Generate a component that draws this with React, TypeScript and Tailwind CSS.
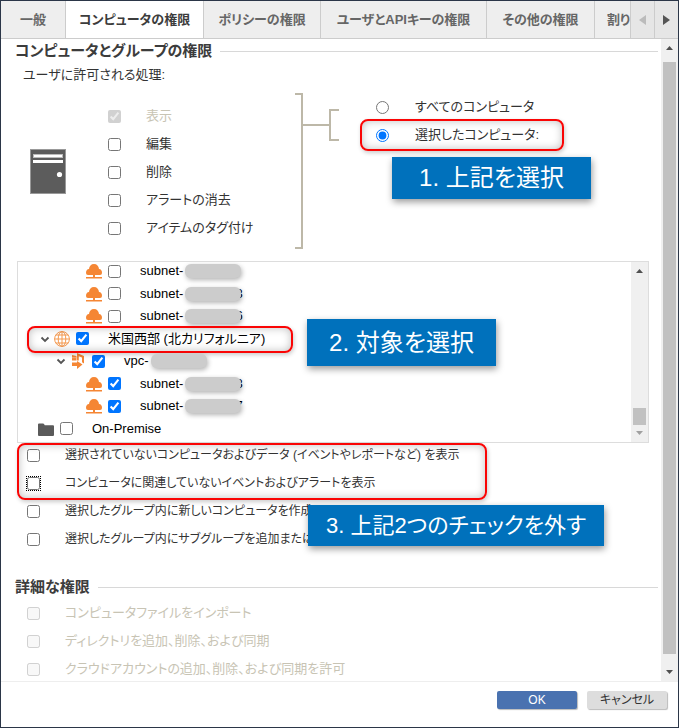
import { ReactNode, useState } from "react";

const TABS = [
  { label: "一般", width: "w-[65px]" },
  { label: "コンピュータの権限", width: "w-[138px]" },
  { label: "ポリシーの権限", width: "w-[117px]" },
  { label: "ユーザとAPIキーの権限", width: "w-[166px]" },
  { label: "その他の権限", width: "w-[108px]" },
  { label: "割り", width: "w-12" },
];

const ACTIONS = [
  { label: "表示", checked: true, disabled: true },
  { label: "編集" },
  { label: "削除" },
  { label: "アラートの消去" },
  { label: "アイテムのタグ付け" },
];

const ADVANCED = [
  "コンピュータファイルをインポート",
  "ディレクトリを追加、削除、および同期",
  "クラウドアカウントの追加、削除、および同期を許可",
];

interface TreeItem {
  kind: "subnet" | "vpc" | "region" | "folder";
  label: string;
  tail?: string;
  checked?: boolean;
}

const TREE: TreeItem[] = [
  { kind: "subnet", label: "subnet-", tail: "" },
  { kind: "subnet", label: "subnet-", tail: "3" },
  { kind: "subnet", label: "subnet-", tail: "6" },
  { kind: "region", label: "米国西部 (北カリフォルニア)", checked: true },
  { kind: "vpc", label: "vpc-", tail: "", checked: true },
  { kind: "subnet", label: "subnet-", tail: "3", checked: true },
  { kind: "subnet", label: "subnet-", tail: "7", checked: true },
  { kind: "folder", label: "On-Premise" },
];

const INDENT = {
  folder: "pl-1",
  region: "pl-5",
  vpc: "pl-9",
  subnet: "pl-[52px]",
};

const Arrow = ({ dir, className }: { dir: "up" | "down"; className: string }) => (
  <svg viewBox="0 0 7 4" className={`w-[7px] h-1 ${className}`} fill="currentColor">
    <path d={dir === "up" ? "M3.5 0 7 4H0z" : "M0 0h7L3.5 4z"} />
  </svg>
);

const ServerIcon = () => (
  <svg viewBox="0 0 36 45" className="w-9 h-[45px] shrink-0">
    <rect width="36" height="45" fill="#999" />
    <rect x="1" y="1" width="34" height="43" fill="#5c5c5c" />
    <rect x="3" y="5" width="30" height="4" fill="#bbb" />
    <rect x="4" y="6" width="28" height="2" fill="#fff" />
    <rect x="3" y="11" width="30" height="3" fill="#fff" />
    <circle cx="29.5" cy="25.5" r="2.6" fill="#fff" />
  </svg>
);

const BracketIcon = () => (
  <svg
    viewBox="0 0 44 156"
    className="w-11 h-[156px] shrink-0"
    fill="none"
    stroke="#bdb8a8"
    strokeWidth="2"
  >
    <path d="M0 1h7v154H0M7 32h28M44 17h-9v30h9" />
  </svg>
);

const TreeIcon = ({ kind }: { kind: TreeItem["kind"] }) => {
  if (kind === "subnet") {
    return (
      <svg viewBox="0 0 16 16" className="w-4 h-4 shrink-0" fill="#f58634">
        <path d="M2 12Q0 12 0 10C0 7.500 1 6.200 3 6 3.300 3 5 1 8 1s4.700 2 5 5c2 .2 3 1.500 3 4Q16 12 14 12z" />
        <path d="M7 12h2v2H7zM0 14h16v1.400H0z" />
      </svg>
    );
  }
  if (kind === "region") {
    return (
      <svg
        viewBox="0 0 16 16"
        className="w-4 h-4 shrink-0"
        fill="none"
        stroke="#f5994f"
        strokeWidth="1"
      >
        <circle cx="8" cy="8" r="7.400" />
        <ellipse cx="8" cy="8" rx="3.800" ry="7.400" />
        <path d="M8 .5v15M.5 8h15M1.800 4h12.400M1.800 12h12.400" />
      </svg>
    );
  }
  if (kind === "vpc") {
    return (
      <svg viewBox="0 0 16 16" className="w-4 h-4 shrink-0" fill="#f58634">
        <path d="M2 2 6.500 3v4.500H2zM2 9.500h5V8l5.500 3.500L7 16v-3H2z" />
        <path d="M7 0 14 3v7.500L12 9.300V4.500L8.800 3.200V7.500H7z" />
        <path d="M2 4.700h4.500" stroke="#fbc59c" strokeWidth=".7" />
      </svg>
    );
  }
  return (
    <svg viewBox="0 0 16 16" className="w-4 h-4 shrink-0" fill="#5a5a5a">
      <path d="M0 3.500Q0 2.500 1 2.500H5q.8 0 1.200.8l.5.9H15q1 0 1 1V14q0 1-1 1H1q-1 0-1-1z" />
    </svg>
  );
};

const Chevron = () => (
  <svg
    viewBox="0 0 10 10"
    className="w-2.5 h-2.5 shrink-0"
    fill="none"
    stroke="#555"
    strokeWidth="1.800"
  >
    <path d="M1.500 3.500 5 7l3.500-3.500" />
  </svg>
);

// Red frame drawn around the control that a step talks about
const Highlight = ({ className }: { className: string }) => (
  <div
    className={`absolute z-10 pointer-events-none rounded-lg border-2 border-[#fa0505] shadow-[inset_0_0_9px_rgba(0,0,0,0.25),1px_2px_4px_rgba(0,0,0,0.2)] ${className}`}
  />
);

const Callout = ({ className, children }: { className: string; children: ReactNode }) => (
  <div
    className={`absolute z-20 flex items-center justify-center whitespace-nowrap bg-[#0071bc] text-white shadow-[1px_3px_7px_rgba(0,0,0,0.4)] ${className}`}
  >
    {children}
  </div>
);

const SectionTitle = ({ children }: { children: ReactNode }) => (
  <div className="flex items-center gap-2 h-5 pr-[3px]">
    <h2 className="text-[15px] font-bold text-[#3c3c3c] whitespace-nowrap">{children}</h2>
    <div className="flex-1 h-px bg-[#d8d8d8]" />
  </div>
);

interface CheckRowProps {
  label: string;
  checked?: boolean;
  disabled?: boolean;
  focused?: boolean;
}

const CheckRow = ({ label, checked, disabled, focused }: CheckRowProps) => (
  <label
    className={`flex items-center gap-[25px] h-7 whitespace-nowrap ${
      disabled ? "text-[#c8c4b4]" : "text-[#333]"
    }`}
  >
    <input
      type="checkbox"
      defaultChecked={checked}
      disabled={disabled}
      className={`w-[13px] h-[13px] shrink-0 ${
        focused ? "outline-1 outline-dotted outline-black" : ""
      }`}
    />
    {label}
  </label>
);

const TreeRow = ({ item }: { item: TreeItem }) => {
  const { kind, label, tail, checked } = item;
  const expandable = kind === "region" || kind === "vpc";

  return (
    <li className={`relative flex flex-1 items-center ${INDENT[kind]}`}>
      {kind === "region" && <Highlight className="left-[9px] -top-0.5 w-[266px] h-[27px]" />}
      {expandable ? (
        <button
          type="button"
          aria-label="折りたたむ"
          className="flex items-center w-4 h-4 pl-0.5 shrink-0"
        >
          <Chevron />
        </button>
      ) : (
        <span className="w-4 shrink-0" />
      )}
      <TreeIcon kind={kind} />
      <label className="flex items-center pl-1.5 text-black whitespace-nowrap">
        <input
          type="checkbox"
          defaultChecked={checked}
          className="w-[13px] h-[13px] mr-[19px] shrink-0"
        />
        {label}
        {tail !== undefined && (
          <>
            <span className="relative z-10 ml-0.5 w-14 h-3.5 rounded-md bg-[#ccc] shadow-[1px_2px_5px_rgba(0,0,0,0.3)]" />
            <span className="-ml-1.5">{tail}</span>
          </>
        )}
      </label>
    </li>
  );
};

const App = () => {
  const [activeTab, setActiveTab] = useState(1);
  const [scope, setScope] = useState("selected");

  return (
    <div className="flex flex-col h-screen overflow-hidden border border-[#2b3648] bg-white text-[13px] leading-5 font-['Liberation_Sans','Noto_Sans_CJK_JP',sans-serif] [font-feature-settings:'palt']">
      <nav className="flex shrink-0 h-[38px] border-b border-[#ccc] bg-[#eee]">
        <div className="flex flex-1 min-w-0 overflow-hidden">
          {TABS.map((tab, i) => (
            <button
              key={tab.label}
              type="button"
              onClick={() => setActiveTab(i)}
              className={`shrink-0 border-r border-[#ccc] font-bold whitespace-nowrap ${tab.width} ${
                i === activeTab ? "bg-white text-[#3c3c3c]" : "text-[#666]"
              }`}
            >
              {tab.label}
            </button>
          ))}
        </div>
        <button
          type="button"
          aria-label="前へ"
          className="flex items-center justify-center w-6 border-l border-[#ccc] bg-[#e6e6e6] text-[#bbb]"
        >
          <svg viewBox="0 0 7 10" className="w-[7px] h-2.5" fill="currentColor">
            <path d="M7 0v10L0 5z" />
          </svg>
        </button>
        <button
          type="button"
          aria-label="次へ"
          className="flex items-center justify-center w-6 border-l border-[#ccc] bg-[#e6e6e6] text-[#555]"
        >
          <svg viewBox="0 0 7 10" className="w-[7px] h-2.5" fill="currentColor">
            <path d="M0 0v10l7-5z" />
          </svg>
        </button>
      </nav>

      <div className="flex flex-1 min-h-0">
        <main className="flex-1 min-w-0 overflow-hidden pt-0.5 pl-3.5">
          <SectionTitle>コンピュータとグループの権限</SectionTitle>
          <p className="mt-1 pl-2 text-[#333]">ユーザに許可される処理:</p>

          <div className="flex mt-2">
            <div className="flex items-center pl-[15px]">
              <ServerIcon />
            </div>
            <div className="w-[229px] pl-[42px] pt-[9px]">
              {ACTIONS.map((a) => (
                <CheckRow key={a.label} {...a} />
              ))}
            </div>
            <BracketIcon />
            <div className="pl-[37px]">
              <label className="flex items-center gap-[26px] h-7 text-[#333] whitespace-nowrap">
                <input
                  type="radio"
                  name="scope"
                  checked={scope === "all"}
                  onChange={() => setScope("all")}
                  className="w-[13px] h-[13px]"
                />
                すべてのコンピュータ
              </label>
              <div className="relative">
                <label className="flex items-center gap-[26px] h-7 text-[#333] whitespace-nowrap">
                  <input
                    type="radio"
                    name="scope"
                    checked={scope === "selected"}
                    onChange={() => setScope("selected")}
                    className="w-[13px] h-[13px]"
                  />
                  選択したコンピュータ:
                </label>
                <Highlight className="-left-4 -top-0.5 w-[204px] h-8" />
                <Callout className="left-4 top-9 w-[199px] h-[42px] text-2xl">
                  1. 上記を選択
                </Callout>
              </div>
            </div>
          </div>

          <div className="relative mt-3 ml-0.5 mr-3 flex h-[182px] border border-[#ddd]">
            <div className="flex-1 min-w-0 overflow-hidden">
              <ul className="flex flex-col h-[180px] -mt-0.5">
                {TREE.map((item, i) => (
                  <TreeRow key={i} item={item} />
                ))}
              </ul>
            </div>
            <div className="flex flex-col items-center justify-between w-[17px] bg-[#f0f0f0] pt-[7px] pb-[7px]">
              <Arrow dir="up" className="text-[#505050]" />
              <div className="flex flex-col items-center gap-1.5">
                <div className="w-[13px] h-[17px] bg-[#c1c1c1]" />
                <Arrow dir="down" className="text-[#a0a0a0]" />
              </div>
            </div>
            <Callout className="left-[289px] top-[57px] w-[189px] h-[47px] text-2xl">
              2. 対象を選択
            </Callout>
          </div>

          <div className="relative pl-3 -mt-0.5 text-xs">
            <CheckRow label="選択されていないコンピュータおよびデータ (イベントやレポートなど) を表示" />
            <CheckRow label="コンピュータに関連していないイベントおよびアラートを表示" focused />
            <CheckRow label="選択したグループ内に新しいコンピュータを作成" />
            <CheckRow label="選択したグループ内にサブグループを追加または削除" />
            <Highlight className="left-0.5 top-0.5 w-[470px] h-[57px]" />
            <Callout className="left-[293px] top-16 w-[296px] h-[41px] text-[22px]">
              3. 上記2つのチェックを外す
            </Callout>
          </div>

          <div className="mt-6">
            <SectionTitle>詳細な権限</SectionTitle>
          </div>
          <div className="pl-3 mt-0.5">
            {ADVANCED.map((label) => (
              <CheckRow key={label} label={label} disabled />
            ))}
          </div>
        </main>

        <div className="flex flex-col items-center w-[17px] shrink-0 bg-[#f0f0f0] py-[7px]">
          <Arrow dir="up" className="text-[#505050]" />
          <div className="flex-1 w-[13px] mt-3 mb-4 bg-[#c1c1c1]" />
          <Arrow dir="down" className="text-[#505050]" />
        </div>
      </div>

      <footer className="flex shrink-0 items-start justify-end gap-2.5 h-[46px] pt-[9px] pr-[11px] border-t border-[#eee] leading-[18px]">
        <button
          type="button"
          className="w-20 h-[18px] rounded-xs bg-[#4a72b0] text-xs text-white shadow-[1px_1px_1px_#bbb]"
        >
          OK
        </button>
        <button
          type="button"
          className="w-20 h-[18px] rounded-xs bg-[#ddd] text-xs text-[#333] shadow-[1px_1px_1px_#bbb]"
        >
          キャンセル
        </button>
      </footer>
    </div>
  );
};

export default App;
